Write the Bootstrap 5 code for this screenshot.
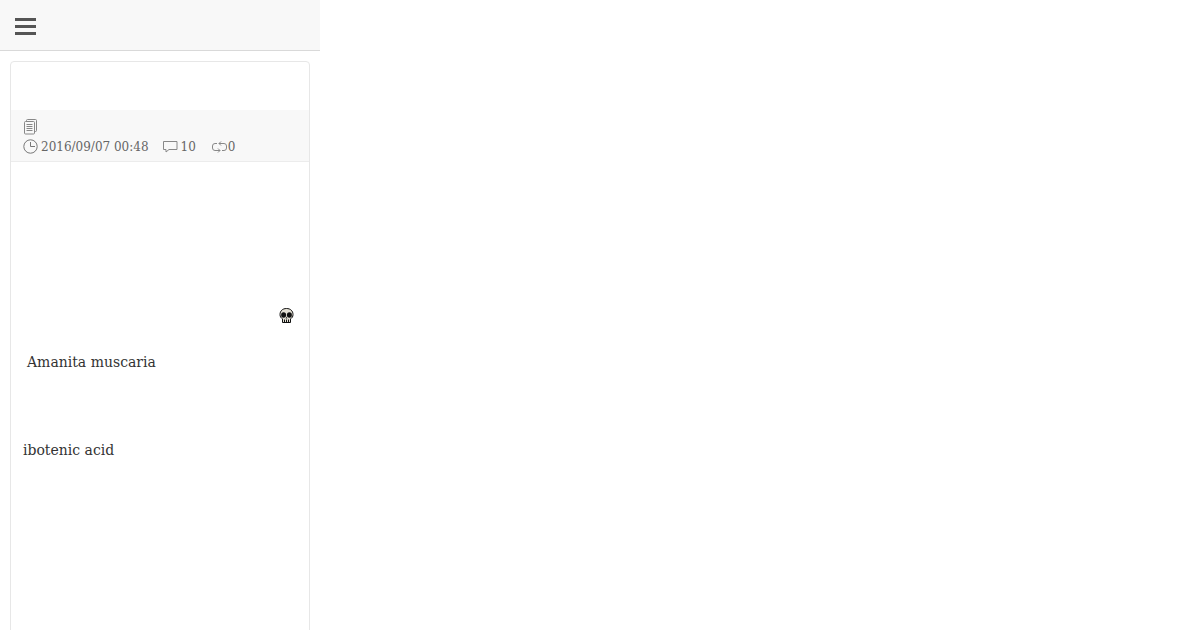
<!DOCTYPE html>
<html>
<head>
  <meta charset="UTF-8">
  <title>Amanita muscaria</title>
  <link href="https://cdn.jsdelivr.net/npm/bootstrap@5.3.6/dist/css/bootstrap.min.css" rel="stylesheet">
  <style>
    html, body { height: 630px; overflow: hidden; background: #fff; }
    body { font-family: "DejaVu Serif", serif; font-size: 14px; color: #333; }
    .phone-col { width: 320px; height: 630px; overflow: hidden; }
    .top-bar { height: 51px; background: #f8f8f8; border-bottom: 1px solid #d9d9d9; padding: 4px 15px 0; }
    .post-card { margin: 10px 10px 0; height: 620px; border-color: #e7e7e7; border-radius: 4px; background: #fff; }
    .post-title { height: 48px; }
    .post-meta { height: 52px; background: #f8f8f8; border-bottom: 1px solid #ececec; padding: 7px 12px 0; font-size: 12px; line-height: 20px; color: #666; }
    .meta-row { height: 20px; }
    .meta-icon { display: block; flex: none; }
    .gap-comment { margin-left: 14px; margin-right: 3px; margin-bottom: 2px; }
    .gap-repost { margin-left: 16px; margin-right: 1px; }
    .gap-clock { margin-right: 3px; margin-top: -1px; }
    .post-body { padding: 0 12px; line-height: 22px; }
    .skull-row { height: 161px; padding: 0 3px 0 0; }
    .name-line { margin-top: 28px; padding-left: 4px; }
    .acid-line { margin-top: 66px; }
  </style>
</head>
<body>
  <div class="phone-col">
    <div class="top-bar d-flex align-items-center">
      <svg width="22" height="18" viewBox="0 0 22 18" class="meta-icon">
        <rect x="0" y="0" width="21" height="3" fill="#555"/>
        <rect x="0" y="7" width="21" height="3" fill="#555"/>
        <rect x="0" y="14" width="21" height="3" fill="#555"/>
      </svg>
    </div>

    <div class="card post-card">
      <div class="post-title"></div>
      <div class="post-meta">
        <div class="meta-row d-flex align-items-center">
          <svg width="15" height="16" viewBox="0 0 15 16" fill="#f8f8f8" stroke="#888" class="meta-icon">
            <rect x="3.5" y="0.5" width="10" height="12" rx="1"/>
            <rect x="1.5" y="2.5" width="10" height="12.5" rx="1"/>
            <path d="M3.500 5.500h6M3.500 7.500h6M3.500 9.500h6M3.500 11.500h6" fill="none"/>
          </svg>
        </div>
        <div class="meta-row d-flex align-items-center">
          <svg width="15" height="15" viewBox="0 0 15 15" fill="none" stroke="#777" class="meta-icon gap-clock">
            <circle cx="7.500" cy="7.500" r="6.700"/>
            <path d="M7.500 3v4.500h4.500"/>
          </svg>
          <span>2016/09/07 00:48</span>
          <svg width="15" height="13" viewBox="0 0 15 13" fill="none" stroke="#888" class="meta-icon gap-comment">
            <path d="M.5 1.500h13.500v8h-8l-3 2.500v-2.500h-2.500z"/>
          </svg>
          <span>10</span>
          <svg width="15" height="12" viewBox="0 0 15 12" fill="none" stroke="#888" class="meta-icon gap-repost">
            <path d="M5 2.500h-2q-2.500 0-2.500 2.500v2q0 2.500 2.500 2.500h5M10 9.500h2q2.500 0 2.500-2.500v-2q0-2.500-2.500-2.500h-5"/>
            <path d="M9 .5l-2 2 2 2M6 7.500l2 2-2 2"/>
          </svg>
          <span>0</span>
        </div>
      </div>
      <div class="post-body">
        <div class="skull-row d-flex justify-content-end align-items-end">
          <svg width="15" height="15" viewBox="0 0 15 15" class="meta-icon">
            <path d="M7.500 .5c4 0 6.500 2.500 6.500 6 0 2.300-1 3.500-2.500 4.300v3.700h-8v-3.700c-1.500-.8-2.500-2-2.500-4.300 0-3.500 2.500-6 6.500-6z" fill="#e4e0d4" stroke="#111"/>
            <ellipse cx="4.600" cy="7" rx="2.500" ry="2.800" fill="#111"/>
            <ellipse cx="10.400" cy="7" rx="2.500" ry="2.800" fill="#111"/>
            <path d="M7.500 8.500l-1 2h2z" fill="#333"/>
            <path d="M5.500 11.500v3M7.500 11.500v3M9.500 11.500v3" stroke="#111"/>
          </svg>
        </div>
        <div class="name-line">Amanita muscaria</div>
        <div class="acid-line">ibotenic acid</div>
      </div>
    </div>
  </div>
  <script src="https://cdn.jsdelivr.net/npm/bootstrap@5.3.6/dist/js/bootstrap.bundle.min.js"></script>
</body>
</html>
